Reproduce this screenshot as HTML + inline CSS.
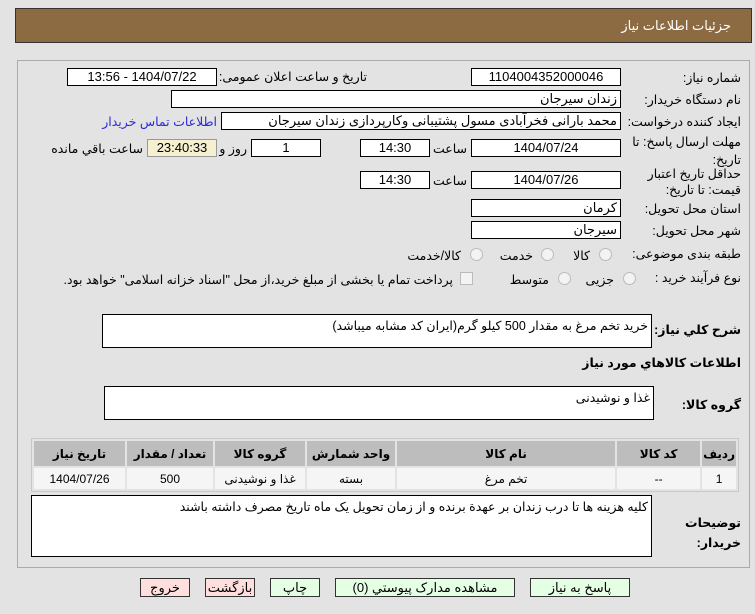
<!DOCTYPE html>
<html><head><meta charset="utf-8"><style>
body{margin:0;width:755px;height:614px;background:#e3e3e3;font-family:Tahoma,"Liberation Sans","DejaVu Sans",sans-serif;font-size:12px;color:#000;position:relative;overflow:hidden}
.a{position:absolute}
.hdr{left:15px;top:8px;width:737px;height:35px;background:#8c6b42;border:1px solid #333;box-sizing:border-box}
.hdr span{position:absolute;right:20px;top:9px;color:#fff;font-size:13px}
.panel{left:17px;top:60px;width:733px;height:508px;border:1px solid #aaa;box-sizing:border-box;background:#e3e3e3}
.box{position:absolute;background:#fff;border:1px solid #000;box-sizing:border-box;height:18px;line-height:16px;font-size:13px;text-align:center;direction:rtl}
.l{text-align:right;padding-right:3px}
.lab{position:absolute;direction:rtl;text-align:right;font-size:12.5px;white-space:nowrap}
.rad{position:absolute;width:11px;height:11px;border-radius:50%;border:1px solid #bbb;background:#f3f3f3}
.ta{position:absolute;background:#fff;border:1px solid #000;box-sizing:border-box;direction:rtl;text-align:right;padding:3px 3px;font-size:12.5px}
table{position:absolute;left:31px;top:438px;width:708px;border-collapse:separate;border-spacing:2px;background:#e3e3e3;border:1px solid #c8c8c8;direction:rtl}
th{background:#bdbdbd;height:23px;font-size:12px;font-weight:bold}
td{background:#f5f5f5;height:19px;text-align:center;font-size:12px}
.btn{position:absolute;top:578px;height:19px;border:1px solid #333;box-sizing:border-box;text-align:center;line-height:17px;font-size:13px}
.g{background:#e5ffe5}.p{background:#ffdede}
</style></head><body>
<div class="a hdr"><span>جزئیات اطلاعات نیاز</span></div>
<div class="a panel"></div>

<div class="lab" style="right:14px;top:70px">شماره نیاز:</div>
<div class="box" style="left:471px;top:68px;width:150px">1104004352000046</div>
<div class="lab" style="right:388px;top:69px">تاریخ و ساعت اعلان عمومی:</div>
<div class="box" style="left:67px;top:68px;width:150px">1404/07/22 - 13:56</div>

<div class="lab" style="right:14px;top:92px">نام دستگاه خریدار:</div>
<div class="box l" style="left:171px;top:90px;width:450px">زندان سیرجان</div>

<div class="lab" style="right:14px;top:114px">ایجاد کننده درخواست:</div>
<div class="box l" style="left:221px;top:112px;width:400px">محمد بارانی فخرآبادی مسول پشتیبانی وکارپردازی زندان سیرجان</div>
<div class="lab" style="right:538px;top:114px;color:#2b2bd6">اطلاعات تماس خریدار</div>

<div class="lab" style="right:14px;top:133px;line-height:18px">مهلت ارسال پاسخ: تا<br>تاریخ:</div>
<div class="box" style="left:471px;top:139px;width:150px">1404/07/24</div>
<div class="lab" style="right:288px;top:141px">ساعت</div>
<div class="box" style="left:360px;top:139px;width:70px">14:30</div>
<div class="box" style="left:251px;top:139px;width:70px">1</div>
<div class="lab" style="right:508px;top:141px">روز و</div>
<div class="box" style="left:147px;top:139px;width:70px;background:#f5f0d0;border-color:#999">23:40:33</div>
<div class="lab" style="right:612px;top:141px">ساعت باقي مانده</div>

<div class="lab" style="right:14px;top:166px;line-height:16px">حداقل تاریخ اعتبار<br>قیمت: تا تاریخ:</div>
<div class="box" style="left:471px;top:171px;width:150px">1404/07/26</div>
<div class="lab" style="right:288px;top:173px">ساعت</div>
<div class="box" style="left:360px;top:171px;width:70px">14:30</div>

<div class="lab" style="right:14px;top:201px">استان محل تحویل:</div>
<div class="box l" style="left:471px;top:199px;width:150px">کرمان</div>
<div class="lab" style="right:14px;top:223px">شهر محل تحویل:</div>
<div class="box l" style="left:471px;top:221px;width:150px">سیرجان</div>

<div class="lab" style="right:14px;top:246px">طبقه بندی موضوعی:</div>
<div class="rad" style="left:599px;top:248px"></div><div class="lab" style="right:165px;top:248px">کالا</div>
<div class="rad" style="left:541px;top:248px"></div><div class="lab" style="right:222px;top:248px">خدمت</div>
<div class="rad" style="left:470px;top:248px"></div><div class="lab" style="right:294px;top:248px">کالا/خدمت</div>

<div class="lab" style="right:14px;top:270px">نوع فرآیند خرید :</div>
<div class="rad" style="left:623px;top:272px"></div><div class="lab" style="right:141px;top:272px">جزیی</div>
<div class="rad" style="left:558px;top:272px"></div><div class="lab" style="right:206px;top:272px">متوسط</div>
<div class="a" style="left:460px;top:272px;width:11px;height:11px;border:1px solid #bbb;background:#f3f3f3"></div>
<div class="lab" style="right:302px;top:272px">پرداخت تمام یا بخشی از مبلغ خرید،از محل "اسناد خزانه اسلامی" خواهد بود.</div>

<div class="lab" style="right:14px;top:322px;font-weight:bold">شرح کلي نیاز:</div>
<div class="ta" style="left:102px;top:314px;width:550px;height:34px">خرید تخم مرغ به مقدار 500 کیلو گرم(ایران کد مشابه میباشد)</div>
<div class="lab" style="right:14px;top:355px;font-weight:bold">اطلاعات کالاهاي مورد نیاز</div>
<div class="lab" style="right:14px;top:397px;font-weight:bold">گروه کالا:</div>
<div class="ta" style="left:104px;top:386px;width:550px;height:34px">غذا و نوشیدنی</div>

<table>
<tr><th style="width:27px">ردیف</th><th style="width:81px">کد کالا</th><th>نام کالا</th><th style="width:86px">واحد شمارش</th><th style="width:88px">گروه کالا</th><th style="width:84px">تعداد / مقدار</th><th style="width:89px">تاریخ نیاز</th></tr>
<tr><td>1</td><td>--</td><td>تخم مرغ</td><td>بسته</td><td>غذا و نوشیدنی</td><td>500</td><td>1404/07/26</td></tr>
</table>

<div class="lab" style="right:14px;top:513px;line-height:20px;font-weight:bold">توضیحات<br>خریدار:</div>
<div class="ta" style="left:31px;top:495px;width:621px;height:62px">کلیه هزینه ها تا درب زندان بر عهدة برنده و از زمان تحویل یک ماه تاریخ مصرف داشته باشند</div>

<div class="btn p" style="left:140px;width:50px">خروج</div>
<div class="btn p" style="left:205px;width:50px">بازگشت</div>
<div class="btn g" style="left:270px;width:50px">چاپ</div>
<div class="btn g" style="left:335px;width:180px">مشاهده مدارک پیوستي (0)</div>
<div class="btn g" style="left:530px;width:100px">پاسخ به نیاز</div>
</body></html>
